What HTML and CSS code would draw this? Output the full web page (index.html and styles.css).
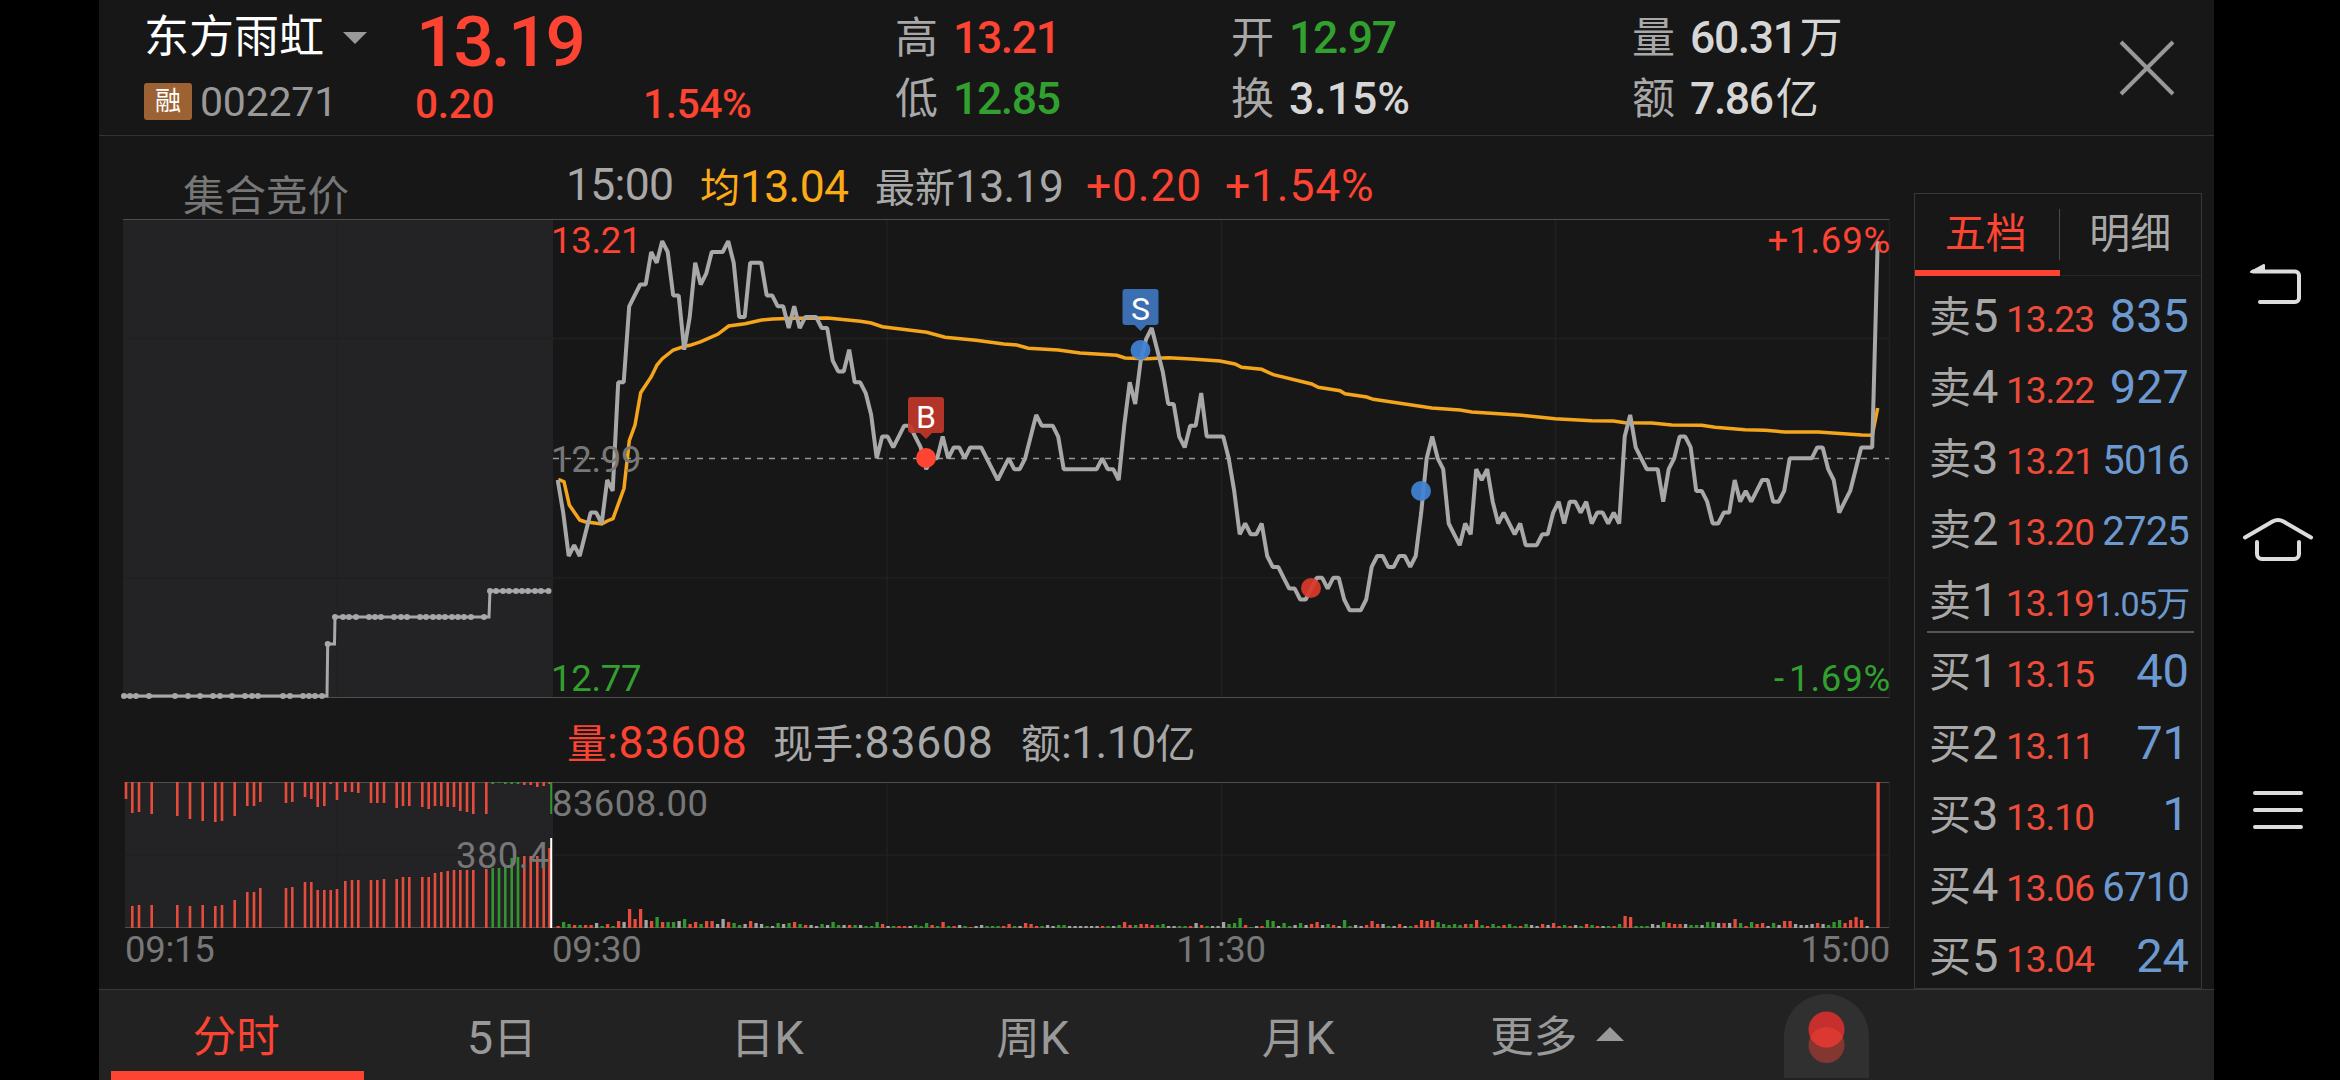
FILE: index.html
```
<!DOCTYPE html>
<html lang="zh-CN">
<head>
    <meta charset="utf-8" />
    <title>东方雨虹 002271</title>
    <link rel="stylesheet" href="styles.css">
</head>
<body>
    <div class="app">
        <header class="quote">
            <div class="stock">
                <div class="stock-name">东方雨虹<i class="arrow-down"></i></div>
                <div class="stock-code"><span class="tag">融</span><span>002271</span></div>
            </div>
            <div class="price">
                <div class="price-now">13.19</div>
                <div class="price-diff"><span>0.20</span><span>1.54%</span></div>
            </div>
            <dl class="stat stat-1">
                <dt>高</dt><dd class="up">13.21</dd>
                <dt>低</dt><dd class="down">12.85</dd>
            </dl>
            <dl class="stat stat-2">
                <dt>开</dt><dd class="down">12.97</dd>
                <dt>换</dt><dd class="percent">3.15%</dd>
            </dl>
            <dl class="stat stat-3">
                <dt>量</dt><dd>60.31<em>万</em></dd>
                <dt>额</dt><dd>7.86<em>亿</em></dd>
            </dl>
            <svg class="close" width="60" height="60" viewBox="0 0 60 60">
                <path d="M4 4L56 56M56 4L4 56" />
            </svg>
        </header>

        <main class="main">
            <section class="charts">
                <div class="info info-price">
                    <span class="auction-title">集合竞价</span>
                    <span class="w1"><b>15:00</b></span>
                    <span class="w2 avg">均<b>13.04</b></span>
                    <span class="w3">最新<b>13.19</b></span>
                    <span class="w4 up"><b>+0.20</b></span>
                    <span class="up"><b>+1.54%</b></span>
                </div>
                <svg class="chart" width="1806" height="480" viewBox="99 219 1806 480">
                    <rect class="auction-bg" x="123" y="219" width="430" height="479" />
                    <path class="grid" d="M337.5 219V698M887 219V698M1221.5 219V698M1555.5 219V698M1889.5 219V698M123 338.5H1889M123 578H1889" />
                    <path class="frame" d="M123 219.5H1889M123 697.5H1889" />
                    <path class="base" d="M553 458.5H1889" />
                    <polyline class="line-auction" points="124,696 327,696 327.7,644 334.5,644 335,617 489,617 490,591 549,591" />
                    <g id="auctionDots" class="dots"></g>
                    <polyline id="avgLine" class="line-avg" />
                    <polyline id="priceLine" class="line-price" />
                    <g class="buy">
                        <path class="flag" d="M911 397h30a3 3 0 0 1 3 3v30a3 3 0 0 1-3 3h-9l-6 6l-6-6h-9a3 3 0 0 1-3-3v-30a3 3 0 0 1 3-3z" />
                        <text x="926" y="427.500">B</text>
                        <circle class="strong" cx="926" cy="458" r="10" />
                        <circle cx="1311" cy="588" r="10" />
                    </g>
                    <g class="sell">
                        <path class="flag" d="M1125.500 289h30a3 3 0 0 1 3 3v30a3 3 0 0 1-3 3h-9l-6 6l-6-6h-9a3 3 0 0 1-3-3v-30a3 3 0 0 1 3-3z" />
                        <text x="1140.500" y="319.500">S</text>
                        <circle cx="1140.500" cy="350" r="10" />
                        <circle cx="1421" cy="491" r="10" />
                    </g>
                    <g class="axis">
                        <text class="up" x="551" y="252.500">13.21</text>
                        <text x="551" y="471.500">12.99</text>
                        <text class="down" x="551" y="690.500">12.77</text>
                        <text class="up end percent" x="1891" y="252.500">+1.69%</text>
                        <text class="down end percent" x="1891" y="690.500"><tspan class="minus">-</tspan>1.69%</text>
                    </g>
                </svg>
                <div class="info info-volume">
                    <span class="v1 up">量<b>:83608</b></span>
                    <span class="v2">现手<b>:83608</b></span>
                    <span>额<b class="amount">:1.10</b>亿</span>
                </div>
                <svg class="chart" width="1806" height="209" viewBox="99 780 1806 209">
                    <rect class="auction-bg" x="125" y="782" width="428" height="146" />
                    <path class="grid" d="M337.5 782V928M887 782V928M1221.5 782V928M1555.5 782V928M1889.5 782V928M125 855H1889" />
                    <path class="frame" d="M125 782.5H1889M125 927.5H1889" />
                    <g id="auctionBars"></g>
                    <g id="volumeBars"></g>
                    <g class="axis">
                        <text class="amount" x="552" y="815.500">83608.00</text>
                        <text class="amount" x="456" y="867.500">380.4</text>
                        <text x="125" y="961.500">09:15</text>
                        <text x="552" y="961.500">09:30</text>
                        <text class="mid" x="1221" y="961.500">11:30</text>
                        <text class="end" x="1890" y="961.500">15:00</text>
                    </g>
                </svg>
            </section>

            <aside class="book">
                <div class="book-tabs">
                    <div class="on">五档</div>
                    <div>明细</div>
                </div>
                <ul>
                    <li><span>卖<b>5</b></span><i>13.23</i><em>835</em></li>
                    <li><span>卖<b>4</b></span><i>13.22</i><em>927</em></li>
                    <li><span>卖<b>3</b></span><i>13.21</i><em class="m">5016</em></li>
                    <li><span>卖<b>2</b></span><i>13.20</i><em class="m">2725</em></li>
                    <li><span>卖<b>1</b></span><i>13.19</i><em class="s">1.05万</em></li>
                    <li class="first-buy"><span>买<b>1</b></span><i>13.15</i><em>40</em></li>
                    <li><span>买<b>2</b></span><i>13.11</i><em>71</em></li>
                    <li><span>买<b>3</b></span><i>13.10</i><em>1</em></li>
                    <li><span>买<b>4</b></span><i>13.06</i><em class="m">6710</em></li>
                    <li><span>买<b>5</b></span><i>13.04</i><em>24</em></li>
                </ul>
            </aside>
        </main>

        <nav class="tabs">
            <div class="on">分时</div>
            <div><b>5</b>日</div>
            <div>日<b>K</b></div>
            <div>周<b>K</b></div>
            <div>月<b>K</b></div>
            <div class="more">更多<i class="arrow-up"></i></div>
            <svg class="float-btn" width="85" height="85" viewBox="0 0 85 85">
                <path class="pill" d="M0 84V42a42.500 42 0 0 1 85 0V84z" />
                <circle class="dot-low" cx="42.500" cy="51" r="18" />
                <circle class="dot-high" cx="42.500" cy="35.500" r="18" />
                <path class="dot-mix" d="M26.250 43.250a18 18 0 0 1 32.500 0a18 18 0 0 1-32.500 0z" />
            </svg>
        </nav>
    </div>

    <div class="system-bar">
        <svg class="back" width="80" height="80" viewBox="2238 244 80 80">
            <path d="M2253 271.500H2295a4 4 0 0 1 4 4V298a4 4 0 0 1-4 4H2260" />
            <path class="fill" d="M2251 272L2264 265V272z" />
        </svg>
        <svg class="home" width="80" height="80" viewBox="2238 500 80 80">
            <path d="M2245 537.500L2272.500 521.500Q2278 518.500 2283.500 521.500L2311 537.500" />
            <path d="M2257 542V554a5 5 0 0 0 5 5H2294a5 5 0 0 0 5-5V542" />
        </svg>
        <svg class="menu" width="80" height="80" viewBox="2238 770 80 80">
            <path d="M2255 793H2301M2255 810H2301M2255 827H2301" />
        </svg>
    </div>
    <script src="script.js"></script>
</body>
</html>
```
FILE: styles.css
```
* {
    margin: 0;
    padding: 0;
    box-sizing: border-box;
}
body {
    display: flex;
    width: 2340px;
    height: 1080px;
    padding-left: 99px;
    overflow: hidden;
    background: #000;
    color: #a8a8a8;
    font-family: Roboto, "Noto Sans CJK SC", sans-serif;
}
b, i, em {
    font-weight: normal;
    font-style: normal;
}
svg {
    display: block;
}
.app {
    display: flex;
    flex-direction: column;
    width: 2115px;
    height: 1080px;
    background: #171717;
}
.up {
    color: #fd4332;
    fill: #fd4332;
}
.down {
    color: #32a02f;
    fill: #32a02f;
}

/* 顶部行情 */
.quote {
    display: flex;
    height: 136px;
    border-bottom: 1px solid #333;
}
.stock {
    width: 317px;
    padding-left: 45px;
}
.stock-name {
    display: flex;
    align-items: center;
    height: 76px;
    color: #fff;
    font-size: 45px;
    line-height: 76px;
}
.arrow-down {
    margin-left: 19px;
    border: 12px solid transparent;
    border-top-color: #999;
    border-bottom: 0;
}
.stock-code {
    display: flex;
    align-items: center;
    height: 51px;
    color: #999;
    font-size: 41px;
    letter-spacing: -0.2px;
}
.tag {
    width: 48px;
    height: 37px;
    margin-right: 8px;
    border-radius: 3px;
    background: #9d6233;
    color: #fff;
    font-size: 26px;
    line-height: 36px;
    letter-spacing: 0;
    text-align: center;
}
.price {
    width: 480px;
    color: #fd4332;
    font-weight: 500;
}
.price-now {
    height: 77px;
    font-size: 71px;
    line-height: 84px;
    letter-spacing: -2.8px;
}
.price-diff {
    display: flex;
    font-size: 40.5px;
    line-height: 54px;
    letter-spacing: -0.3px;
}
.price-diff span {
    width: 229px;
    margin-left: -1px;
}
.stat {
    display: grid;
    grid-template-columns: 57px 1fr;
    grid-template-rows: 61px 61px;
    align-items: center;
    padding-top: 8px;
    height: 130px;
}
.stat-1 {
    width: 336px;
}
.stat-2 {
    width: 401px;
}
.stat-3 {
    width: 421px;
}
.stat dt {
    margin-left: -1px;
    font-size: 43px;
    line-height: 61px;
}
.stat dd {
    font-size: 44.5px;
    font-weight: 500;
    line-height: 61px;
    letter-spacing: -1.4px;
}
.stat .percent {
    letter-spacing: 0;
}
.stat dd:not(.up):not(.down) {
    color: #d6d6d6;
}
.stat em {
    font-size: 43px;
    margin-left: 3px;
    font-weight: 400;
}
.close {
    margin: 38px 0 0 63px;
}
.close path {
    stroke: #999;
    stroke-width: 4;
}

/* 图表 */
.main {
    display: flex;
    height: 853px;
}
.charts {
    width: 1815px;
}
.info {
    display: flex;
    align-items: center;
    font-size: 40px;
    white-space: nowrap;
}
.info b {
    font-size: 44.5px;
    letter-spacing: -0.7px;
}
.info .up b, .info-volume b {
    letter-spacing: 0.8px;
}
.info .amount {
    letter-spacing: -0.6px;
}
.info-price {
    height: 83px;
    padding-left: 83px;
}
.info-price span {
    margin-top: 15px;
}
.info-price .up {
    margin-top: 17px;
}
.info-price .auction-title {
    width: 384px;
    margin-top: 0;
    padding: 37px 0 0 1px;
    height: 83px;
    color: #777;
    font-size: 41.5px;
    line-height: 48px;
}
.w1 {
    width: 134px;
}
.w2 {
    width: 175px;
}
.w3 {
    width: 211px;
}
.w4 {
    width: 139px;
}
.avg {
    color: #fdaa17;
}
.info-volume {
    height: 81px;
    padding: 2px 0 0 468px;
}
.v1 {
    width: 206px;
}
.v2 {
    width: 248px;
}
.auction-bg {
    fill: #232325;
}
.grid {
    stroke: #202021;
    stroke-width: 1.5;
}
.frame {
    stroke: #4e4e4e;
}
.base {
    stroke: #999;
    stroke-width: 1.4;
    stroke-dasharray: 6 6;
}
.line-auction, .line-price, .line-avg {
    fill: none;
    stroke: #a8a8a8;
    stroke-width: 3;
}
.line-price {
    stroke-width: 4;
    stroke-linejoin: bevel;
}
.line-avg {
    stroke: #f5a51b;
    stroke-width: 3.5;
}
.dots {
    fill: #a8a8a8;
}
.axis text {
    font-size: 36.5px;
    letter-spacing: -0.3px;
}
.axis .amount {
    letter-spacing: 0.4px;
}
.axis .percent {
    letter-spacing: 0.8px;
}
.axis .minus {
    letter-spacing: 5px;
}
.axis text:not(.up):not(.down) {
    fill: #777;
}
.end {
    text-anchor: end;
}
.mid {
    text-anchor: middle;
}
.buy {
    fill: #d9392b;
}
.sell {
    fill: #4182d3;
}
.buy circle, .sell circle {
    opacity: 0.93;
}
.buy .strong {
    fill: #ff4433;
    opacity: 1;
}
.buy .flag {
    fill: #c0372b;
    opacity: 0.93;
}
.sell .flag {
    fill: #3b6fb2;
}
.buy text, .sell text {
    fill: #fff;
    font-size: 32px;
    text-anchor: middle;
}
.r {
    fill: #e54c3c;
}
.g {
    fill: #35942f;
}
.w {
    fill: #a3a3a3;
}
.x {
    fill: #fff;
}

/* 五档 */
.book {
    width: 288px;
    height: 796px;
    margin-top: 57px;
    border: 1px solid #383838;
}
.book-tabs {
    display: flex;
    height: 82px;
    border-bottom: 1px solid #262626;
    font-size: 41px;
    line-height: 81px;
    text-align: center;
}
.book-tabs div {
    flex: 1;
}
.book-tabs .on {
    height: 82px;
    padding-right: 3px;
    border-bottom: 6px solid #fd4332;
    color: #fd4332;
    background: linear-gradient(#4a4a4a, #4a4a4a) 100% 15px / 1px 51px no-repeat;
}
.book ul {
    list-style: none;
}
.book li {
    display: flex;
    align-items: baseline;
    height: 71.1px;
    padding: 0 12px 0 14px;
    line-height: 79px;
    white-space: nowrap;
}
.book li span {
    width: 77px;
    font-size: 42px;
}
.book li b {
    margin-left: 1px;
    font-size: 47px;
}
.book li i {
    width: 89px;
    color: #ee4b3b;
    font-size: 37px;
    letter-spacing: -1px;
}
.book li em {
    flex: 1;
    display: flex;
    justify-content: flex-end;
    color: #6c99d0;
    font-size: 47px;
}
.book li .m {
    font-size: 40px;
    letter-spacing: -0.8px;
}
.book li .s {
    font-size: 34px;
    letter-spacing: -1.2px;
}
.book .first-buy {
    background: linear-gradient(#555, #555) 12px 0 / 267px 2px no-repeat;
}

/* 底部周期 */
.tabs {
    display: flex;
    height: 91px;
    padding-left: 6px;
    border-top: 1px solid #383838;
    background: #222;
    color: #999;
    font-size: 43.5px;
    line-height: 95px;
    text-align: center;
}
.tabs div {
    width: 265.5px;
    height: 90px;
    padding-right: 3px;
}
.tabs b {
    font-size: 47px;
}
.tabs .on {
    color: #fd4332;
    background: linear-gradient(#fd4332, #fd4332) 6px 100% / 253px 9px no-repeat;
}
.tabs .more {
    display: flex;
    align-items: flex-start;
    justify-content: center;
    padding-right: 16px;
}
.arrow-up {
    margin: 37px 0 0 19px;
    border: 14px solid transparent;
    border-top: 0;
    border-bottom-color: #999;
}
.float-btn {
    margin: 4px 0 0 86px;
}
.pill {
    fill: #303030;
}
.dot-low {
    fill: #843731;
}
.dot-high {
    fill: #c72e2e;
}
.dot-mix {
    fill: #dc3832;
}

/* 系统导航键 */
.system-bar {
    display: flex;
    flex-direction: column;
    padding: 244px 0 0 24px;
}
.system-bar path {
    fill: none;
    stroke: #ddd;
    stroke-width: 4;
    stroke-linecap: round;
    stroke-linejoin: round;
}
.system-bar .fill {
    fill: #ddd;
    stroke-width: 2;
}
.home {
    margin-top: 176px;
}
.menu {
    margin-top: 190px;
}
```
FILE: script.js
```
var NS = 'http://www.w3.org/2000/svg';
var X0 = 557.7, STEP = 5.5;

// 每分钟价格，相对昨收 12.99 的跳动数（0.01 元）
var prices = [
    -2,-5,-9,-8,-9,-7,-5,-5,-6,-2,-3,7,7,14,15,16,16,19,18,20,
    19,15,15,10,13,18,16,17,19,19,19,20,18,13,13,18,18,18,15,15,
    14,14,12,14,12,13,13,13,12,12,9,8,8,10,7,7,6,4,0,2,
    2,1,2,3,3,2,1,-1,0,0,2,0,1,1,0,1,1,1,0,-1,
    -2,-1,0,-1,-1,0,2,4,3,3,3,2,-1,-1,-1,-1,-1,-1,-1,0,
    -1,-1,-2,3,7,5,9,11,12,10,8,5,5,2,1,3,3,6,2,2,
    2,2,0,-3,-7,-6,-7,-7,-6,-9,-10,-10,-11,-12,-12,-13,-13,-12,-11,-11,
    -12,-11,-11,-13,-14,-14,-14,-13,-10,-9,-9,-10,-10,-9,-9,-10,-9,-5,0,2,
    0,-1,-6,-7,-8,-6,-7,-1,-2,-1,-4,-6,-5,-6,-7,-6,-8,-8,-8,-7,
    -7,-5,-4,-6,-4,-4,-5,-4,-6,-5,-5,-6,-5,-6,2,4,1,0,-1,-1,
    -1,-4,-1,0,2,2,1,-3,-3,-4,-6,-6,-5,-5,-2,-4,-3,-4,-3,-2,
    -2,-4,-4,-3,0,0,0,0,0,1,1,-1,-2,-5,-4,-3,-1,1,1,1,20
];

// 均价线
var avg = '558.3,479.3 564,481.7 569.3,505 579.7,520 585,521.7 601.7,524 607.3,521 613,518.7 624,488.3 ' +
    '629.3,440.7 635,425 640.7,392.7 651.3,376.7 657,365 662.3,358.7 673.3,350 684.7,346.3 690,345.3 701,341.7 ' +
    '717.7,334.3 728.7,326 745,323.7 761.7,320 772.7,319 794.7,318.3 827.7,318 860.3,321.3 871.3,323 882.3,326.7 ' +
    '926.7,332.3 945,337.3 976,340.3 1003.7,344 1016.7,345 1028.3,348.3 1058.3,350 1080,353 1116.7,355.3 1125,358 ' +
    '1146.7,358.7 1168.3,357.7 1191.7,359 1220,361 1235,364 1241.7,367.3 1261.7,369.3 1273.3,374.7 1311.7,384 ' +
    '1318.3,387.3 1340,390.7 1345,393.7 1366.7,397 1373.3,399.3 1431.7,408 1460,410 1471.7,412 1521.7,415.3 ' +
    '1555,418.7 1591.7,420.7 1613.3,421 1625,422.7 1651.7,423 1671.7,425 1701.7,425.3 1715,427.3 1745,429.7 ' +
    '1765,430.3 1785,432 1818.3,432 1861.7,435 1872.3,435.3 1877.7,408';

// 每分钟成交量：颜色 + 高度
var volumes = ('r2 g6 g4 r3 g3 r3 r3 w5 g2 r4 g2 r7 w6 r19 r9 r19 w8 r7 g11 r6 g6 g6 w7 g9 r4 r6 g4 r7 r7 w4 ' +
    'w9 r6 g5 g3 w4 r7 w5 w4 g2 w2 g5 w4 g5 r6 g4 r3 w3 w2 g4 w3 g6 g3 w3 r3 g3 w3 g2 g2 g6 r4 ' +
    'w2 g2 r2 r2 w2 g3 g2 g5 r3 g2 r6 g2 r2 w3 g2 r1 w2 w3 g2 g2 g2 r2 r4 g2 w2 r5 r4 r2 g2 w3 ' +
    'w2 g3 g3 w2 w2 w2 w2 w2 w2 r2 g2 w2 g3 r6 r3 g3 r4 r4 r3 g3 g4 w2 w2 g2 g2 r2 w5 r3 g2 w2 ' +
    'w2 w6 g4 g5 g10 r3 g1 w2 r2 g8 g7 w2 g5 g2 w3 g5 w3 r4 r6 w3 g4 r3 w2 g8 g2 w3 w2 r3 r7 r4 ' +
    'w4 g2 w2 r4 w2 g2 r3 r8 r7 r8 g6 g4 g3 g4 g3 r4 g4 r8 g3 r2 g4 g2 r3 g4 g2 r2 g4 w3 w2 r4 ' +
    'w3 r5 r2 g3 r2 w3 g2 r4 g3 r2 w2 g2 r2 g4 r12 r11 g2 g2 g2 w4 w3 g6 r5 r4 r4 w4 g3 g3 w3 g6 ' +
    'g6 w5 r5 w5 r9 g5 r2 g6 r4 r5 w2 g5 w3 r7 r7 w4 w3 w3 w4 r5 w4 g3 g6 g8 r5 r8 r11 r8 w2 w0 r146').split(' ');

// 集合竞价 [x, 未匹配量, 匹配量, 颜色]
var auction = [
    [126,17,0],[132.3,31,22],[139,30,23],[151.7,32,23],[177.3,34,23],[190,37,22],[202.7,39,23],[215.3,40,22],
    [222,39,23],[234.7,34,28],[247.3,24,36],[254,24,36],[260.3,20,40],[286,21,40],[292.3,20,41],[305,15,46],
    [311.3,17,46],[317.7,25,38],[324.3,24,38],[330.7,2,38],[337,18,39],[345.3,10,47],[352,10,48],[358.3,11,48],
    [371,21,48],[377.3,21,48],[384,21,49],[396.7,26,49],[403,24,51],[409.3,24,51],[422.3,25,51],[428.7,27,51],
    [435,24,55],[441.3,24,56],[447.7,25,57],[454,25,58],[460.3,29,58],[467,30,58],[473.3,32,58],[486.3,32,59],
    [492.7,2,60,'g'],[499,1,60,'g'],[505.3,2,61,'g'],[511.7,2,70,'g'],[518,2,71,'g'],
    [524.3,3,72],[530.7,3,72],[537.3,5,72],[543.7,4,75],[549.5,2,80]
];

// 集合竞价打点
var dotRows = [
    [696, [124,130,136,149,175,188,200,213,220,232,245,252,258,283,290,303,309,315,322]],
    [644, [327.7]],
    [617, [335,343,349,356,369,375,381,394,401,407,420,426,433,439,445,452,458,464,471,484]],
    [591, [490,496,503,509,516,522,528,535,541,548.5]]
];

function add(parent, name, attrs) {
    var el = document.createElementNS(NS, name);
    for (var k in attrs) {
        el.setAttribute(k, attrs[k]);
    }
    parent.appendChild(el);
}

function bar(parent, cls, x, y, w, h) {
    if (h > 0) {
        add(parent, 'rect', { 'class': cls, x: x - w / 2, y: y, width: w, height: h });
    }
}

document.getElementById('priceLine').setAttribute('points', prices.map(function (t, i) {
    return (X0 + i * STEP).toFixed(1) + ',' + (458.3 - t * 10.86).toFixed(1);
}).join(' '));
document.getElementById('avgLine').setAttribute('points', avg);

var dots = document.getElementById('auctionDots');
dotRows.forEach(function (row) {
    row[1].forEach(function (x) {
        add(dots, 'circle', { cx: x, cy: row[0], r: 3 });
    });
});

var auctionBars = document.getElementById('auctionBars');
auction.forEach(function (a) {
    bar(auctionBars, a[3] || 'r', a[0], 782, 2.6, a[1]);
    bar(auctionBars, a[3] || 'r', a[0], 928 - a[2], 2.6, a[2]);
});
bar(auctionBars, 'g', 551.2, 782, 2, 32);
bar(auctionBars, 'x', 551.2, 838, 2, 90);

var volumeBars = document.getElementById('volumeBars');
volumes.forEach(function (v, i) {
    var h = +v.slice(1);
    bar(volumeBars, v.charAt(0), X0 + i * STEP + 0.4, 928 - h, 3.3, h);
});
```
